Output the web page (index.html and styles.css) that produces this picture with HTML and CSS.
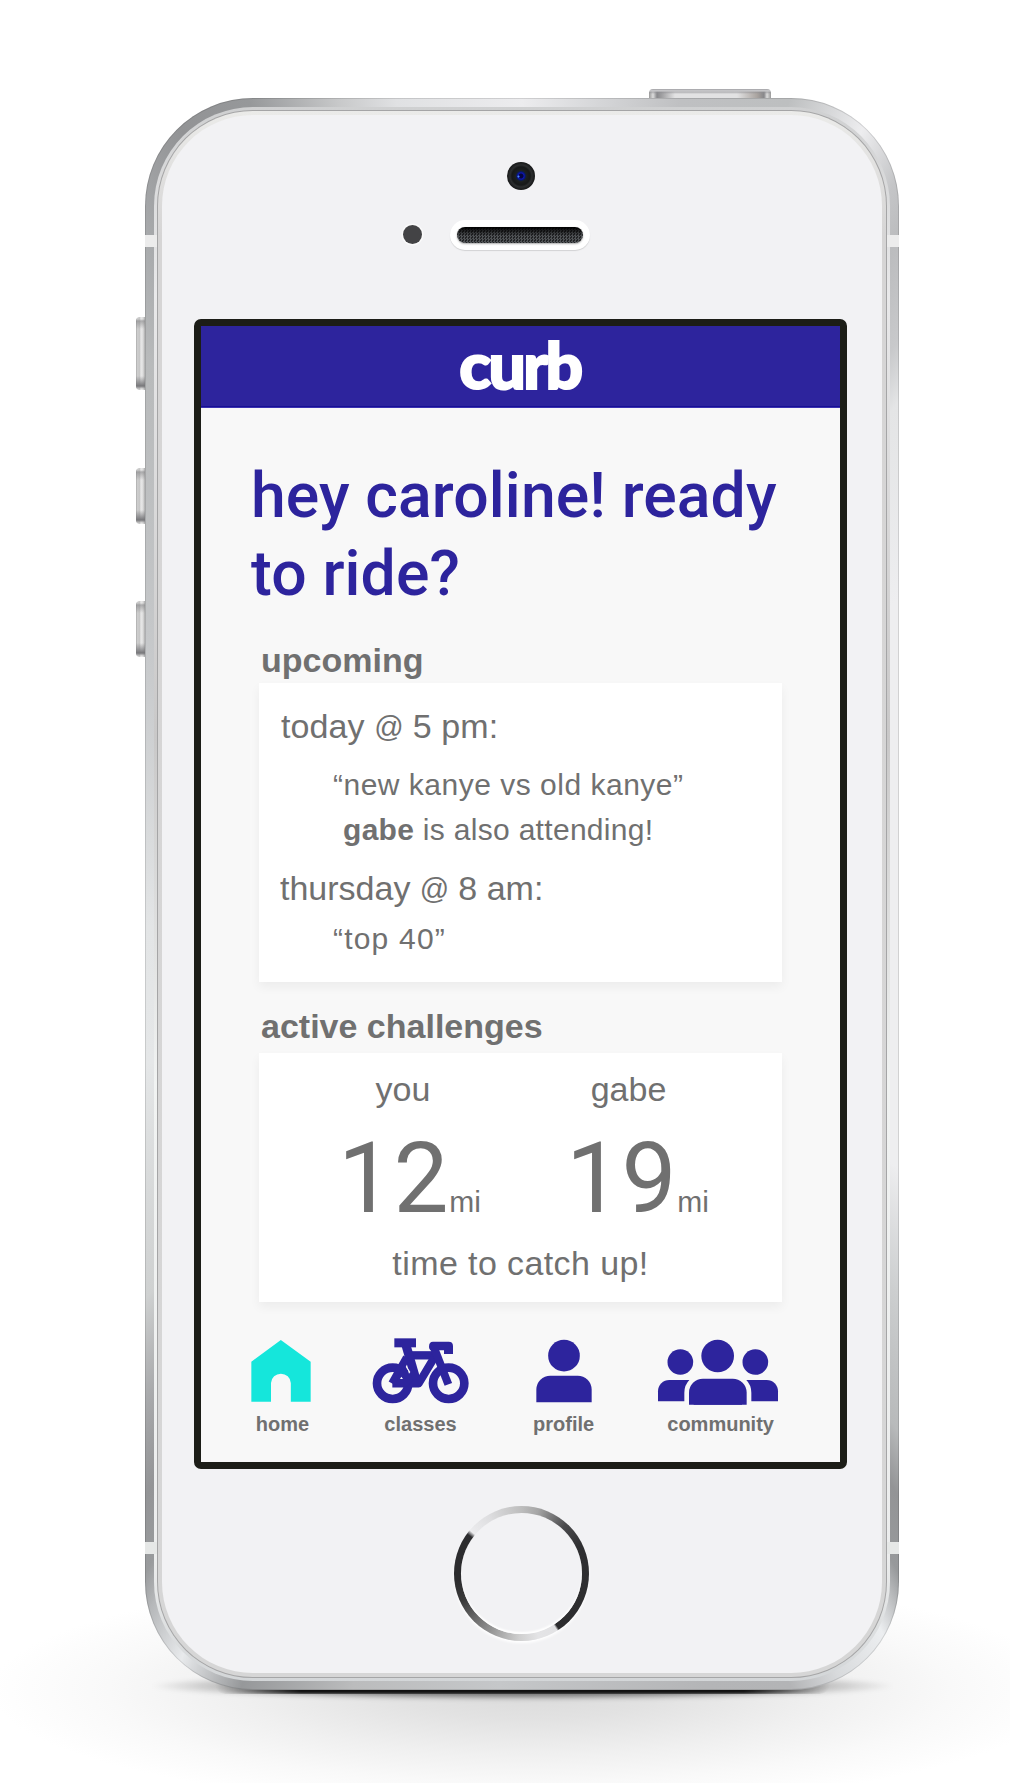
FILE: index.html
```html
<!DOCTYPE html>
<html lang="en">
<head>
<meta charset="utf-8">
<title>curb</title>
<link rel="stylesheet" href="styles.css">
</head>
<body>
<div class="stage">
  <div class="floor-glow"></div>
  <div class="floor-side"></div>
  <div class="floor-contact"></div>
  <div class="phone">
    <span class="key power"></span>
    <span class="key mute"></span>
    <span class="key vol-up"></span>
    <span class="key vol-down"></span>
    <span class="band top left"></span>
    <span class="band top right"></span>
    <span class="band bottom left"></span>
    <span class="band bottom right"></span>
    <div class="bevel">
      <div class="groove">
        <div class="lip">
          <div class="face">
            <div class="camera"><i></i></div>
            <div class="sensors">
              <span class="sensor"></span>
              <span class="speaker"><i></i></span>
            </div>
            <main class="screen">
              <header class="bar"><span class="logo">curb</span></header>
              <h1 class="greeting">hey caroline! ready<br>to ride?</h1>
              <section class="block">
                <h2 class="title">upcoming</h2>
                <div class="card upcoming">
                  <p class="when">today <span class="at">@</span> 5 pm:</p>
                  <p class="what first">“new kanye vs old kanye”</p>
                  <p class="what friend"><b>gabe</b> is also attending!</p>
                  <p class="when second">thursday <span class="at">@</span> 8 am:</p>
                  <p class="what last">“top 40”</p>
                </div>
              </section>
              <section class="block">
                <h2 class="title second-title">active challenges</h2>
                <div class="card challenge">
                  <div class="rivals">
                    <div class="rival you">
                      <p class="name">you</p>
                      <p class="score">12<small>mi</small></p>
                    </div>
                    <div class="rival gabe">
                      <p class="name">gabe</p>
                      <p class="score">19<small>mi</small></p>
                    </div>
                  </div>
                  <p class="nudge">time to catch up!</p>
                </div>
              </section>
              <nav class="tabs">
                <a class="tab home">
                  <svg viewBox="64 54 180 201" width="60" height="67"><path fill="#15e6db" d="M153.500 60 243 125V245.500H183.500V189a29.800 29.800 0 0 0-59.500 0V245.500H65V125Z"/></svg>
                  <span>home</span>
                </a>
                <a class="tab classes">
                  <svg viewBox="425 54 291 201" width="97" height="67">
                    <g fill="none" stroke="#2d249d">
                      <circle cx="487" cy="190" r="47" stroke-width="26"/>
                      <circle cx="655" cy="190" r="47" stroke-width="26"/>
                      <path stroke-width="25" d="M530 106H618"/>
                      <path stroke-width="27" d="M527 76 559 186"/>
                      <path stroke-width="23" d="M529 112 485 190"/>
                      <path stroke-width="24" stroke-linejoin="round" d="M486 190.500H565L617 104"/>
                      <path stroke-width="24" d="M609 78 654 193"/>
                    </g>
                    <g fill="#2d249d">
                      <path d="M492 55H557V82H492Z"/>
                      <path d="M608 65H655Q668 65 668 78V102H641V91H606Q596 91 596 80 596 65 608 65Z"/>
                      <path d="M505 166 520 130 549 180 530 200H495Z"/>
                    </g>
                    <path fill="#f8f8f8" d="M530 140 540 156 536 161ZM513 170 518 177H509Z"/>
                  </svg>
                  <span>classes</span>
                </a>
                <a class="tab profile">
                  <svg viewBox="103 54 180 201" width="60" height="67"><g fill="#2d249d"><circle cx="193" cy="107" r="47.500"/><path d="M110 247V209a42 42 0 0 1 42-42h82a42 42 0 0 1 42 42v38Z"/></g></svg>
                  <span>profile</span>
                </a>
                <a class="tab community">
                  <svg viewBox="468 54 372 204" width="124" height="68"><g fill="#2d249d">
                    <path d="M474 243.500V214a34 34 0 0 1 34-34h292a34 34 0 0 1 34 34v29.500Z"/>
                    <path stroke="#f8f8f8" stroke-width="28" d="M567 290V218a42 42 0 0 1 42-42h89a42 42 0 0 1 42 42v72Z"/>
                    <path fill="#f8f8f8" d="M553 254.500H755V258H553Z"/>
                    <path d="M567 254.500V218a42 42 0 0 1 42-42h89a42 42 0 0 1 42 42v36.500Z"/>
                    <circle cx="541" cy="126" r="38.500"/><circle cx="653" cy="108" r="49"/><circle cx="766" cy="126" r="38.500"/>
                  </g></svg>
                  <span>community</span>
                </a>
              </nav>
            </main>
            <div class="home-button"><i></i></div>
          </div>
        </div>
      </div>
    </div>
  </div>
</div>
</body>
</html>
```

FILE: styles.css
```css
* { box-sizing: border-box; }
body {
  margin: 0;
  background: #fff;
  font-family: "Liberation Sans", Arial, sans-serif;
  color: #707070;
}
h1, h2, p { margin: 0; }

.stage {
  position: relative;
  height: 1783px;
  padding: 98px 0 0 145px;
  overflow: hidden;
}

/* soft light falling on the floor behind and below the phone */
.floor-glow {
  position: absolute;
  inset: 1540px 0 0 0;
  background: radial-gradient(540px 118px at 530px 150px, #dadada 0%, #e2e2e2 25%, #f0f0f0 55%, #f9f9f9 78%, #fff 100%);
}
.floor-side {
  position: absolute;
  left: 150px;
  top: 1672px;
  width: 745px;
  height: 28px;
  background: radial-gradient(closest-side, #0008 0%, #0007 60%, #0003 82%, #0000 100%);
  filter: blur(2px);
}
.floor-contact {
  position: absolute;
  left: 215px;
  top: 1674px;
  width: 615px;
  height: 20px;
  border-radius: 40px;
  background: #111;
  filter: blur(1.5px);
  mask-image: linear-gradient(90deg, #0000, #000 14%, #000 86%, #0000);
}

/* phone body, one layer for each step of the chamfered rim */
.phone {
  position: relative;
  width: 754px;
  height: 1592px;
  padding: 9px;
  border-radius: 108px;
  background: conic-gradient(
    #ececee 0deg, #d5d6d8 5.6deg, #bfc0c2 11.3deg, #bdbfc0 18.6deg, #ededef 24deg,
    #c4c5c7 27.6deg, #bbbcbe 29.8deg, #c8c9cb 34.2deg, #e4e5e6 37.4deg, #eeeef0 52deg,
    #eeeef0 126deg, #cccecf 137deg, #b8babb 145deg, #939496 148deg, #97999b 151deg,
    #eceef0 154deg, #d8dadc 158deg, #b3b4b6 161.3deg, #b4b5b7 167deg, #c5c7c9 181.6deg,
    #bbbcbd 192deg, #96989a 199.5deg, #e8eaec 204deg, #b5b7b9 207.5deg, #999b9d 209deg,
    #939496 212deg, #a9aaac 216.7deg, #cfd1d1 223deg, #e5e7e8 245.6deg, #e3e5e6 265deg,
    #c6c8ca 304deg, #b8babb 325deg, #a9abad 330deg, #929395 336deg, #96989a 341deg,
    #c8c9ca 347deg, #e0e1e3 351deg, #ececee 360deg);
  box-shadow: inset 0 0 0 1px #0000001f;
}
.bevel {
  height: 100%;
  padding: 3px;
  border-radius: 99px;
  background: linear-gradient(#cfd0d1, #e9e9ea 12%, #c9c8c8 40%, #f1f3f2 62%, #eceded 92%, #d3d6d8);
}
.groove {
  height: 100%;
  padding: 1px;
  border-radius: 96px;
  background: #a5a5a6;
}
.lip {
  height: 100%;
  padding: 4px;
  border-radius: 95px;
  background: linear-gradient(#ebebe9, #d6d5d5 8%, #d6d6d6);
}
.face {
  display: flex;
  flex-direction: column;
  height: 100%;
  padding-top: 47px;
  border-radius: 91px;
  background: #f2f2f4;
}

.band { position: absolute; width: 12px; height: 12px; background: #ececec; z-index: 1; }
.band.top { top: 137px; }
.band.bottom { top: 1444px; background: #e6e8e7; }
.band.left { left: 0; }
.band.right { right: 0; }

.key { position: absolute; left: -9px; width: 9px; border-radius: 4px 0 0 4px; background:
  linear-gradient(#0000 2px, #83838599 4px, #0000 12px, #0000 calc(100% - 14px), #77777a calc(100% - 4px), #ccc0 calc(100% - 1px)),
  linear-gradient(90deg, #aaa 0, #d8d8d8 2px, #bbb 3px, #e8e8e8 5px, #ddd 7px, #aaa); }
.mute { top: 219px; height: 73px; }
.vol-up { top: 370px; height: 56px; }
.vol-down { top: 503px; height: 56px; }
.power {
  left: 504px;
  top: -9px;
  width: 122px;
  height: 9px;
  border-radius: 4px 4px 0 0;
  background:
    linear-gradient(#a0a0a4 0, #d0d0d2 2px, #8f8f9399 3px, #fff0 5px),
    linear-gradient(90deg, #999 0, #ddd 4px, #89898c 8px, #a5a5a7 14px, #e2e2e3 26px, #e2e2e3 88px, #aaa4a0 108px, #87878a 115px, #ddd 118px, #999);
}

.camera {
  width: 28px;
  height: 28px;
  margin-left: 345px;
  padding: 9px;
  border-radius: 50%;
  background: radial-gradient(circle at 50% 50%, #1a2a38 0 4px, #1c1e1e 6px, #161818 9px, #2c2e2f 11px, #151616 14px);
}
.camera i {
  display: block;
  width: 10px;
  height: 10px;
  border-radius: 50%;
  background: radial-gradient(circle at 25% 55%, #4f8cff 0 .5px, #0000 1.500px), radial-gradient(circle, #050540 0 2px, #0d16b4 3px, #0a1a40 5px);
}
.sensors { display: flex; gap: 28px; align-items: center; margin: 30px 0 0 241px; height: 30px; }
.sensor { width: 19px; height: 19px; margin-top: -2px; border-radius: 50%; background: #434345; box-shadow: 0 0 0 1.500px #fafafa; }
.speaker { width: 140px; height: 30px; padding: 7px; border-radius: 15px; background: #fff; box-shadow: 0 1px 1px #0002; }
.speaker i {
  display: block;
  height: 16px;
  border-radius: 8px;
  background:
    linear-gradient(#000 0, #000a 3px, #0000 9px),
    repeating-conic-gradient(#505356 0 25%, #232426 0 50%) 0 0 / 3px 3px;
  box-shadow: 0 1px 2px #0005;
}

.home-button {
  width: 135px;
  height: 135px;
  margin: 37px 0 0 292px;
  padding: 7px;
  border-radius: 50%;
  background: conic-gradient(#bdbdbd 0deg, #a5a5a5 15deg, #4a4a4c 42deg, #2f2f31 65deg, #2d2d2f 146deg, #e2e2e4 148deg,
    #e4e4e6 165deg, #cfcfcf 182deg, #a8a8a8 200deg, #747474 222deg, #3a3a3a 245deg, #2c2c2e 265deg, #2c2c2e 306deg, #ececee 310deg, #dedee0 330deg, #bdbdbd 360deg);
  box-shadow: 0 2px 3px #fff;
}
.home-button i {
  display: block;
  height: 100%;
  border-radius: 50%;
  background: #f2f2f4;
  box-shadow: inset 0 -2px 2px #fff;
}

/* app */
.screen {
  width: 653px;
  height: 1150px;
  margin: 69px 0 0 32px;
  border: 7px solid #1c1d17;
  border-radius: 7px;
  background: #f8f8f8;
}
.bar {
  display: flex;
  justify-content: center;
  height: 82px;
  background: #2d249d;
  border-bottom: 1px solid #3b32b0;
  box-shadow: inset 0 -1px #170f96;
}
.logo {
  font: 900 64px/77px Lato, sans-serif;
  letter-spacing: -2.5px;
  margin-right: 2px;
  color: #fff;
  -webkit-text-stroke: 2px #fff;
  transform: scaleX(1.03);
}
.greeting {
  margin: 49px 0 0 50px;
  font: 500 62.5px/78px Roboto, sans-serif;
  letter-spacing: 0.1px;
  white-space: nowrap;
  color: #2d249d;
}
.block { width: 523px; margin-left: 58px; }
.title { margin: 27px 0 3px 2px; font-size: 34px; line-height: 40px; font-weight: bold; }
.second-title { margin: 24px 0 7px 2px; }
.card { background: #fff; box-shadow: 0 5px 10px #0000000d; }
.upcoming { height: 299px; padding: 23px 0 0 22px; }
.when { font-size: 34px; line-height: 40px; letter-spacing: 0.1px; }
.at { display: inline-block; width: 29px; font-size: 29px; line-height: 30px; vertical-align: 1px; }
.what { font-size: 30px; line-height: 40px; letter-spacing: 0.5px; white-space: nowrap; }
.first { margin: 19px 0 0 52px; }
.friend { margin: 5px 0 0 62px; letter-spacing: 0.3px; }
.second { margin: 18px 0 0 -1px; letter-spacing: 0; }
.last { margin: 11px 0 0 52px; letter-spacing: 1.2px; }
.challenge { height: 249px; padding-top: 16px; }
.rivals { display: flex; }
.name { font-size: 34px; line-height: 40px; text-align: center; }
.rival { width: 140px; }
.you { margin-left: 74px; }
.gabe { margin-left: 88px; }
.gabe .name { margin-left: -5px; }
.score { margin: 20px 0 0 5px; font: 98px/100px Roboto, sans-serif; letter-spacing: 0.5px; white-space: nowrap; }
.score small { font: 30px/0 "Liberation Sans", Arial, sans-serif; letter-spacing: 0; }
.nudge { margin-top: 14px; font-size: 34px; line-height: 40px; letter-spacing: 0.4px; text-align: center; }

.tabs { display: flex; margin: 36px 0 0 50px; }
.tab { display: flex; flex-direction: column; align-items: center; height: 100px; }
.tab svg { display: block; flex: none; }
.tab span { margin-top: 7px; font-size: 20px; font-weight: bold; line-height: 24px; }
.home span { padding-left: 3px; }
.classes { margin-left: 61px; }
.profile { margin-left: 64px; }
.community { margin-left: 62px; }
.community span { margin-top: 6px; padding-left: 5px; }
```
